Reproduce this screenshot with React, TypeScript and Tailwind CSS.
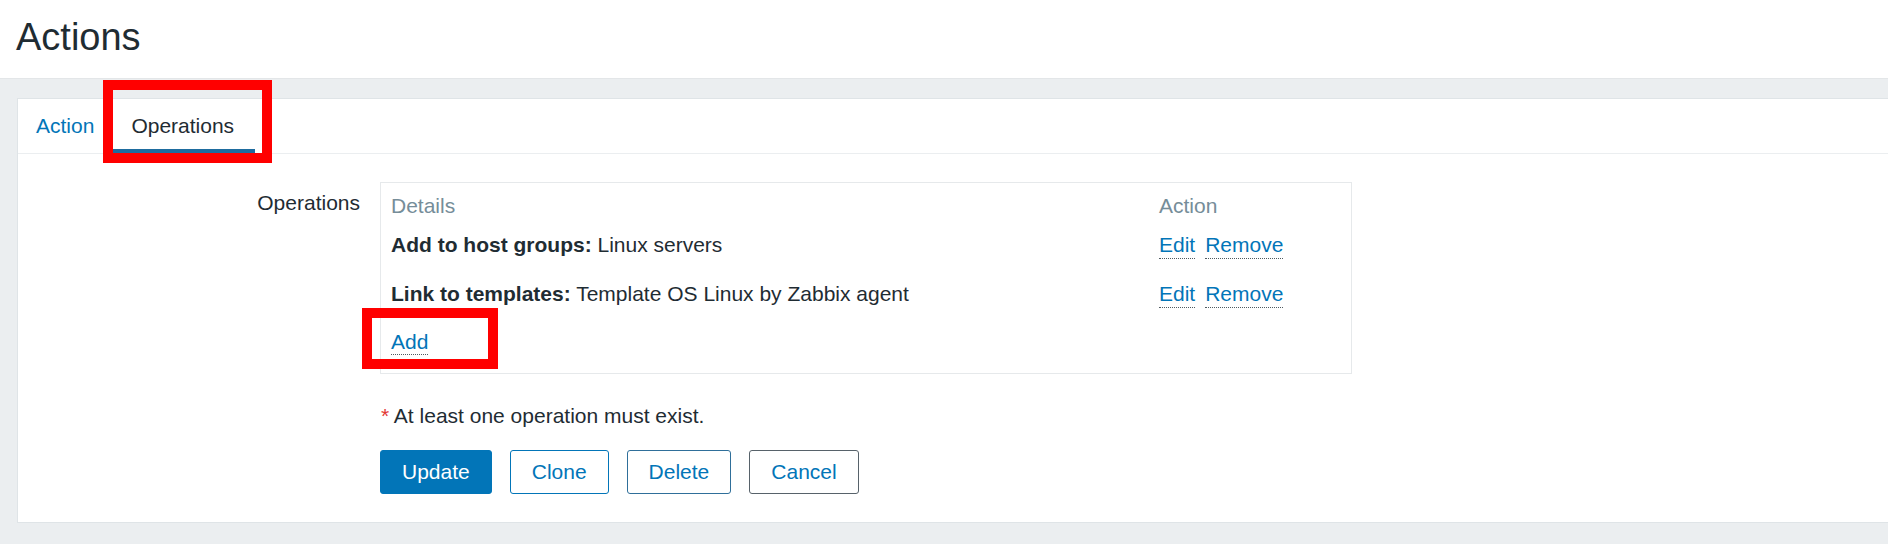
import React from 'react';

const operations = [
  { label: 'Add to host groups:', value: 'Linux servers' },
  { label: 'Link to templates:', value: 'Template OS Linux by Zabbix agent' },
];

const LinkAction = ({ children }: { children: React.ReactNode }) => (
  <a className="text-[#0275b8] border-b border-dotted border-[#4f5a60] pb-[1px] cursor-pointer">
    {children}
  </a>
);

const App = () => {
  return (
    <div className="relative w-full h-[544px] overflow-hidden bg-[#ebeef0] text-[#1f2c33] font-['Liberation_Sans',Arial,sans-serif]">
      {/* Page header */}
      <div className="h-[79px] bg-white border-b border-[#e3e6e8] pl-[16px] pt-[18px]">
        <h1 className="text-[38px] leading-[38px] font-normal">Actions</h1>
      </div>

      {/* Panel */}
      <div className="mt-[19px] ml-[17px] bg-white border-t border-l border-b border-[#dfe4e7] text-[21px]">
        {/* Tabs */}
        <div className="flex h-[55px] border-b border-[#ebeef0]">
          <div className="flex items-center px-[18px] text-[#0275b8]">Action</div>
          <div className="flex items-center pl-[18px] pr-[21px] ml-[1px] border-b-4 border-[#1e6c9f] pt-[4px] text-[#1f2c33]">
            Operations
          </div>
        </div>

        {/* Form */}
        <div className="pt-[28px] pb-[28px]">
          <div className="flex">
            <div className="w-[362px] pr-[20px] pt-[9px] text-right leading-[24px]">Operations</div>
            <div className="w-[972px] border border-[#e6e9eb] leading-[24px]">
              <div className="flex px-[10px] pt-[11px] pb-[3px] text-[#768d99]">
                <div className="w-[768px]">Details</div>
                <div>Action</div>
              </div>
              {operations.map((op, i) => (
                <div key={i} className="flex px-[10px] pt-[12px] pb-[11px]">
                  <div className="w-[768px]">
                    <span className="font-bold">{op.label}</span> {op.value}
                  </div>
                  <div className="flex gap-[10px]">
                    <LinkAction>Edit</LinkAction>
                    <LinkAction>Remove</LinkAction>
                  </div>
                </div>
              ))}
              <div className="px-[10px] pt-[11px] pb-[19px]">
                <LinkAction>Add</LinkAction>
              </div>
            </div>
          </div>

          <div className="pl-[363px] mt-[30px] leading-[24px]">
            <span className="text-[#e33734]">*</span> At least one operation must exist.
          </div>

          <div className="pl-[362px] mt-[22px] flex gap-[18px]">
            <button className="h-[44px] px-[21px] rounded-[3px] bg-[#0275b8] border border-[#0275b8] text-white">Update</button>
            <button className="h-[44px] px-[21px] rounded-[3px] bg-white border border-[#0275b8] text-[#0275b8]">Clone</button>
            <button className="h-[44px] px-[21px] rounded-[3px] bg-white border border-[#2f6f9a] text-[#0275b8]">Delete</button>
            <button className="h-[44px] px-[21px] rounded-[3px] bg-white border border-[#57626a] text-[#0275b8]">Cancel</button>
          </div>
        </div>
      </div>

      {/* Annotation boxes */}
      <div className="absolute left-[103px] top-[80px] w-[169px] h-[83px] border-[10px] border-[#ff0000]" />
      <div className="absolute left-[362px] top-[308px] w-[136px] h-[61px] border-[10px] border-[#ff0000]" />
    </div>
  );
};

export default App;
